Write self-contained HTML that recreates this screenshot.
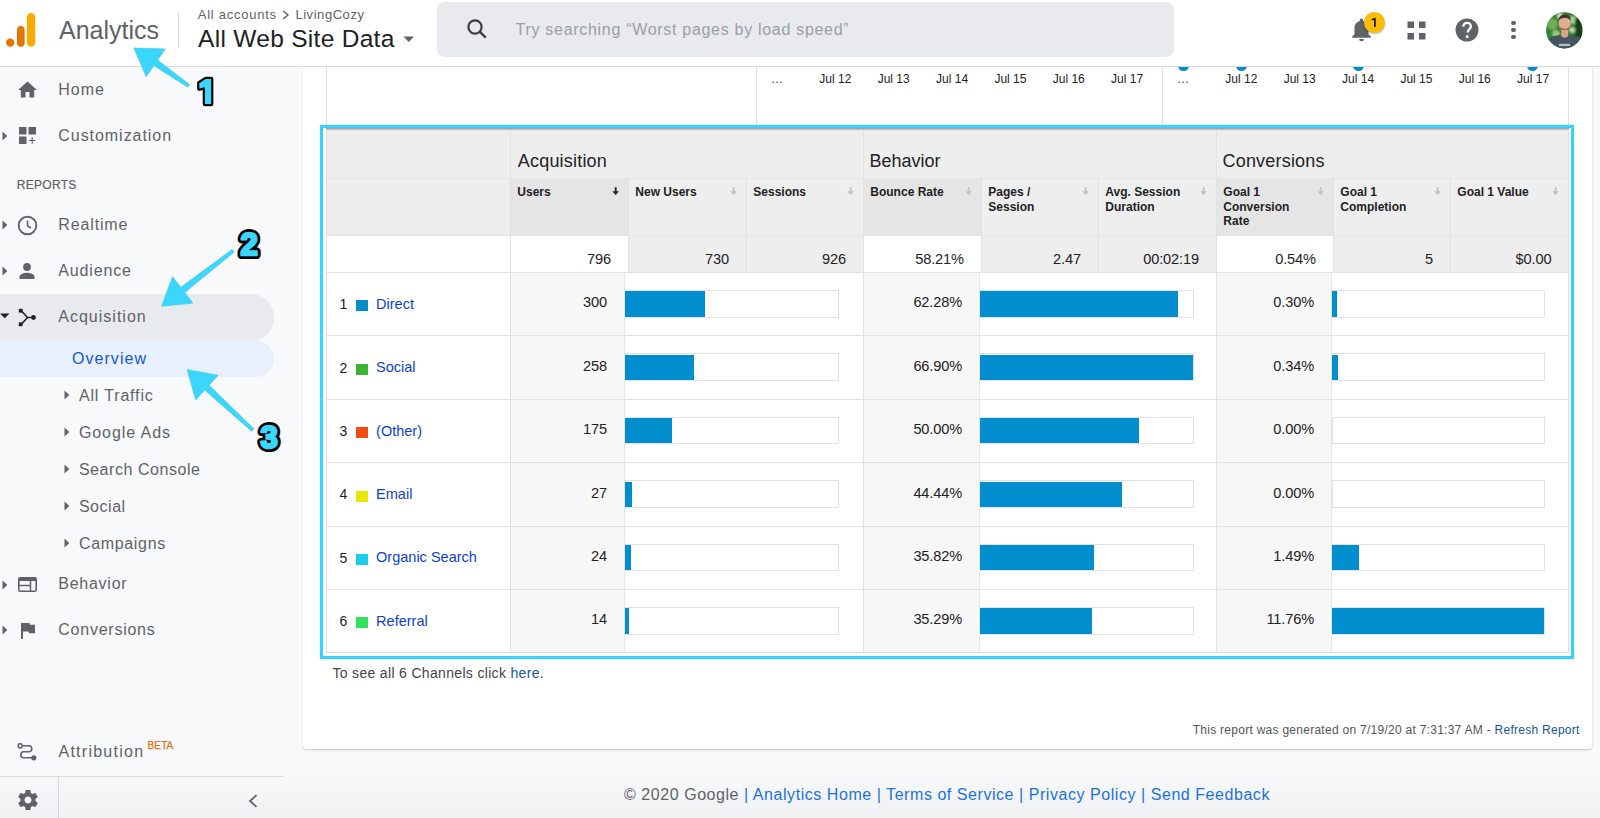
<!DOCTYPE html><html><head><meta charset="utf-8"><style>
html,body{margin:0;padding:0;}
body{width:1600px;height:818px;overflow:hidden;position:relative;background:#f8f9fa;font-family:"Liberation Sans", sans-serif;}
.t{position:absolute;white-space:nowrap;}
.r{position:absolute;}
a{color:inherit;text-decoration:none;}
</style></head><body>
<div class="r" style="left:303.00px;top:66.00px;width:1289.00px;height:683.00px;background:#ffffff;box-shadow:0 1px 2px rgba(60,64,67,.28);border-radius:0 0 3px 3px;"></div>
<div class="r" style="left:302.00px;top:66.00px;width:1.00px;height:683.00px;background:#eceef1;"></div>
<div class="r" style="left:326.00px;top:66.00px;width:1.00px;height:60.00px;background:#e0e0e0;"></div>
<div class="r" style="left:756.00px;top:66.00px;width:1.00px;height:60.00px;background:#e0e0e0;"></div>
<div class="r" style="left:1162.00px;top:66.00px;width:1.00px;height:60.00px;background:#e0e0e0;"></div>
<div class="r" style="left:1568.00px;top:66.00px;width:1.00px;height:60.00px;background:#e0e0e0;"></div>
<div class="t" style="left:277.00px;width:1000px;text-align:center;top:72.84px;font-size:12px;line-height:12px;color:#444;font-weight:normal;">&hellip;</div>
<div class="t" style="left:335.35px;width:1000px;text-align:center;top:72.84px;font-size:12px;line-height:12px;color:#222;font-weight:normal;">Jul 12</div>
<div class="t" style="left:393.70px;width:1000px;text-align:center;top:72.84px;font-size:12px;line-height:12px;color:#222;font-weight:normal;">Jul 13</div>
<div class="t" style="left:452.05px;width:1000px;text-align:center;top:72.84px;font-size:12px;line-height:12px;color:#222;font-weight:normal;">Jul 14</div>
<div class="t" style="left:510.40px;width:1000px;text-align:center;top:72.84px;font-size:12px;line-height:12px;color:#222;font-weight:normal;">Jul 15</div>
<div class="t" style="left:568.75px;width:1000px;text-align:center;top:72.84px;font-size:12px;line-height:12px;color:#222;font-weight:normal;">Jul 16</div>
<div class="t" style="left:627.10px;width:1000px;text-align:center;top:72.84px;font-size:12px;line-height:12px;color:#222;font-weight:normal;">Jul 17</div>
<div class="t" style="left:683.00px;width:1000px;text-align:center;top:72.84px;font-size:12px;line-height:12px;color:#444;font-weight:normal;">&hellip;</div>
<div class="t" style="left:741.35px;width:1000px;text-align:center;top:72.84px;font-size:12px;line-height:12px;color:#222;font-weight:normal;">Jul 12</div>
<div class="t" style="left:799.70px;width:1000px;text-align:center;top:72.84px;font-size:12px;line-height:12px;color:#222;font-weight:normal;">Jul 13</div>
<div class="t" style="left:858.05px;width:1000px;text-align:center;top:72.84px;font-size:12px;line-height:12px;color:#222;font-weight:normal;">Jul 14</div>
<div class="t" style="left:916.40px;width:1000px;text-align:center;top:72.84px;font-size:12px;line-height:12px;color:#222;font-weight:normal;">Jul 15</div>
<div class="t" style="left:974.75px;width:1000px;text-align:center;top:72.84px;font-size:12px;line-height:12px;color:#222;font-weight:normal;">Jul 16</div>
<div class="t" style="left:1033.10px;width:1000px;text-align:center;top:72.84px;font-size:12px;line-height:12px;color:#222;font-weight:normal;">Jul 17</div>
<div class="r" style="left:1177.5px;top:60.0px;width:11px;height:11px;border-radius:50%;background:#058dc7"></div>
<div class="r" style="left:1235.8px;top:60.0px;width:11px;height:11px;border-radius:50%;background:#058dc7"></div>
<div class="r" style="left:1352.5px;top:60.0px;width:11px;height:11px;border-radius:50%;background:#058dc7"></div>
<div class="r" style="left:1526.5px;top:60.0px;width:11px;height:11px;border-radius:50%;background:#058dc7"></div>
<div class="r" style="left:326.00px;top:128.00px;width:1242.50px;height:107.00px;background:#eeeeee;"></div>
<div class="r" style="left:510.00px;top:178.00px;width:118.00px;height:57.00px;background:#e5e5e5;"></div>
<div class="r" style="left:863.00px;top:178.00px;width:118.00px;height:57.00px;background:#e5e5e5;"></div>
<div class="r" style="left:1216.00px;top:178.00px;width:117.00px;height:57.00px;background:#e5e5e5;"></div>
<div class="r" style="left:326.00px;top:235.00px;width:184.00px;height:37.00px;background:#ffffff;"></div>
<div class="r" style="left:510.00px;top:235.00px;width:118.00px;height:37.00px;background:#ffffff;"></div>
<div class="r" style="left:628.00px;top:235.00px;width:118.00px;height:37.00px;background:#eeeeee;"></div>
<div class="r" style="left:746.00px;top:235.00px;width:117.00px;height:37.00px;background:#eeeeee;"></div>
<div class="r" style="left:863.00px;top:235.00px;width:118.00px;height:37.00px;background:#ffffff;"></div>
<div class="r" style="left:981.00px;top:235.00px;width:117.00px;height:37.00px;background:#eeeeee;"></div>
<div class="r" style="left:1098.00px;top:235.00px;width:118.00px;height:37.00px;background:#eeeeee;"></div>
<div class="r" style="left:1216.00px;top:235.00px;width:117.00px;height:37.00px;background:#ffffff;"></div>
<div class="r" style="left:1333.00px;top:235.00px;width:117.00px;height:37.00px;background:#eeeeee;"></div>
<div class="r" style="left:1450.00px;top:235.00px;width:118.50px;height:37.00px;background:#eeeeee;"></div>
<div class="r" style="left:326.00px;top:272.00px;width:1242.50px;height:63.40px;background:#ffffff;"></div>
<div class="r" style="left:510.00px;top:272.00px;width:114.00px;height:63.40px;background:#f7f7f7;"></div>
<div class="r" style="left:863.00px;top:272.00px;width:116.00px;height:63.40px;background:#f7f7f7;"></div>
<div class="r" style="left:1216.00px;top:272.00px;width:115.00px;height:63.40px;background:#f7f7f7;"></div>
<div class="r" style="left:326.00px;top:335.40px;width:1242.50px;height:63.40px;background:#ffffff;"></div>
<div class="r" style="left:510.00px;top:335.40px;width:114.00px;height:63.40px;background:#f7f7f7;"></div>
<div class="r" style="left:863.00px;top:335.40px;width:116.00px;height:63.40px;background:#f7f7f7;"></div>
<div class="r" style="left:1216.00px;top:335.40px;width:115.00px;height:63.40px;background:#f7f7f7;"></div>
<div class="r" style="left:326.00px;top:398.80px;width:1242.50px;height:63.40px;background:#ffffff;"></div>
<div class="r" style="left:510.00px;top:398.80px;width:114.00px;height:63.40px;background:#f7f7f7;"></div>
<div class="r" style="left:863.00px;top:398.80px;width:116.00px;height:63.40px;background:#f7f7f7;"></div>
<div class="r" style="left:1216.00px;top:398.80px;width:115.00px;height:63.40px;background:#f7f7f7;"></div>
<div class="r" style="left:326.00px;top:462.20px;width:1242.50px;height:63.40px;background:#ffffff;"></div>
<div class="r" style="left:510.00px;top:462.20px;width:114.00px;height:63.40px;background:#f7f7f7;"></div>
<div class="r" style="left:863.00px;top:462.20px;width:116.00px;height:63.40px;background:#f7f7f7;"></div>
<div class="r" style="left:1216.00px;top:462.20px;width:115.00px;height:63.40px;background:#f7f7f7;"></div>
<div class="r" style="left:326.00px;top:525.60px;width:1242.50px;height:63.40px;background:#ffffff;"></div>
<div class="r" style="left:510.00px;top:525.60px;width:114.00px;height:63.40px;background:#f7f7f7;"></div>
<div class="r" style="left:863.00px;top:525.60px;width:116.00px;height:63.40px;background:#f7f7f7;"></div>
<div class="r" style="left:1216.00px;top:525.60px;width:115.00px;height:63.40px;background:#f7f7f7;"></div>
<div class="r" style="left:326.00px;top:589.00px;width:1242.50px;height:63.40px;background:#ffffff;"></div>
<div class="r" style="left:510.00px;top:589.00px;width:114.00px;height:63.40px;background:#f7f7f7;"></div>
<div class="r" style="left:863.00px;top:589.00px;width:116.00px;height:63.40px;background:#f7f7f7;"></div>
<div class="r" style="left:1216.00px;top:589.00px;width:115.00px;height:63.40px;background:#f7f7f7;"></div>
<div class="r" style="left:326.00px;top:178.00px;width:1242.50px;height:1.00px;background:#e6e6e6;"></div>
<div class="r" style="left:326.00px;top:235.00px;width:1242.50px;height:1.00px;background:#e6e6e6;"></div>
<div class="r" style="left:326.00px;top:272.00px;width:1242.50px;height:1.00px;background:#e2e2e2;"></div>
<div class="r" style="left:326.00px;top:335.40px;width:1242.50px;height:1.00px;background:#e2e2e2;"></div>
<div class="r" style="left:326.00px;top:398.80px;width:1242.50px;height:1.00px;background:#e2e2e2;"></div>
<div class="r" style="left:326.00px;top:462.20px;width:1242.50px;height:1.00px;background:#e2e2e2;"></div>
<div class="r" style="left:326.00px;top:525.60px;width:1242.50px;height:1.00px;background:#e2e2e2;"></div>
<div class="r" style="left:326.00px;top:589.00px;width:1242.50px;height:1.00px;background:#e2e2e2;"></div>
<div class="r" style="left:326.00px;top:652.40px;width:1242.50px;height:1.00px;background:#e2e2e2;"></div>
<div class="r" style="left:510.00px;top:128.00px;width:1.00px;height:524.80px;background:#e2e2e2;"></div>
<div class="r" style="left:863.00px;top:128.00px;width:1.00px;height:524.80px;background:#e2e2e2;"></div>
<div class="r" style="left:1216.00px;top:128.00px;width:1.00px;height:524.80px;background:#e2e2e2;"></div>
<div class="r" style="left:628.00px;top:178.00px;width:1.00px;height:94.00px;background:#e2e2e2;"></div>
<div class="r" style="left:746.00px;top:178.00px;width:1.00px;height:94.00px;background:#e2e2e2;"></div>
<div class="r" style="left:981.00px;top:178.00px;width:1.00px;height:94.00px;background:#e2e2e2;"></div>
<div class="r" style="left:1098.00px;top:178.00px;width:1.00px;height:94.00px;background:#e2e2e2;"></div>
<div class="r" style="left:1333.00px;top:178.00px;width:1.00px;height:94.00px;background:#e2e2e2;"></div>
<div class="r" style="left:1450.00px;top:178.00px;width:1.00px;height:94.00px;background:#e2e2e2;"></div>
<div class="r" style="left:624.00px;top:272.00px;width:1.00px;height:380.80px;background:#e6e6e6;"></div>
<div class="r" style="left:979.00px;top:272.00px;width:1.00px;height:380.80px;background:#e6e6e6;"></div>
<div class="r" style="left:1331.00px;top:272.00px;width:1.00px;height:380.80px;background:#e6e6e6;"></div>
<div class="r" style="left:326px;top:128px;width:1242.5px;height:524.8px;box-sizing:border-box;border:1px solid #dddddd;border-top:none"></div>
<div class="r" style="left:326.00px;top:128.00px;width:1242.50px;height:1.00px;background:#a2a4a5;"></div>
<div class="r" style="left:326.00px;top:129.00px;width:1242.50px;height:1.00px;background:#c8c6c5;"></div>
<div class="r" style="left:326.00px;top:130.00px;width:1242.50px;height:1.00px;background:#e2e2e2;"></div>
<div class="t " style="left:517.80px;top:151.76px;font-size:18px;line-height:18px;color:#222;font-weight:normal;letter-spacing:0.2px;">Acquisition</div>
<div class="t " style="left:869.50px;top:151.76px;font-size:18px;line-height:18px;color:#222;font-weight:normal;">Behavior</div>
<div class="t " style="left:1222.50px;top:151.76px;font-size:18px;line-height:18px;color:#222;font-weight:normal;letter-spacing:0.2px;">Conversions</div>
<div class="t " style="left:517.30px;top:186.44px;font-size:12px;line-height:12px;color:#222;font-weight:bold;">Users</div>
<svg class="r" style="left:611px;top:186px" width="8" height="10" viewBox="0 0 8 10"><path d="M3.75 1.2h1.9v4h2.5L4.7 9 1.3 5.2h2.45z" fill="#262626"/></svg>
<div class="t " style="left:635.30px;top:186.44px;font-size:12px;line-height:12px;color:#222;font-weight:bold;">New Users</div>
<svg class="r" style="left:729px;top:186px" width="8" height="10" viewBox="0 0 8 10"><path d="M3.75 1.2h1.9v4h2.5L4.7 9 1.3 5.2h2.45z" fill="#c2c2c2"/></svg>
<div class="t " style="left:753.30px;top:186.44px;font-size:12px;line-height:12px;color:#222;font-weight:bold;">Sessions</div>
<svg class="r" style="left:846px;top:186px" width="8" height="10" viewBox="0 0 8 10"><path d="M3.75 1.2h1.9v4h2.5L4.7 9 1.3 5.2h2.45z" fill="#c2c2c2"/></svg>
<div class="t " style="left:870.30px;top:186.44px;font-size:12px;line-height:12px;color:#222;font-weight:bold;">Bounce Rate</div>
<svg class="r" style="left:964px;top:186px" width="8" height="10" viewBox="0 0 8 10"><path d="M3.75 1.2h1.9v4h2.5L4.7 9 1.3 5.2h2.45z" fill="#c2c2c2"/></svg>
<div class="t " style="left:988.30px;top:186.44px;font-size:12px;line-height:12px;color:#222;font-weight:bold;">Pages /</div>
<div class="t " style="left:988.30px;top:200.74px;font-size:12px;line-height:12px;color:#222;font-weight:bold;">Session</div>
<svg class="r" style="left:1081px;top:186px" width="8" height="10" viewBox="0 0 8 10"><path d="M3.75 1.2h1.9v4h2.5L4.7 9 1.3 5.2h2.45z" fill="#c2c2c2"/></svg>
<div class="t " style="left:1105.30px;top:186.44px;font-size:12px;line-height:12px;color:#222;font-weight:bold;">Avg. Session</div>
<div class="t " style="left:1105.30px;top:200.74px;font-size:12px;line-height:12px;color:#222;font-weight:bold;">Duration</div>
<svg class="r" style="left:1199px;top:186px" width="8" height="10" viewBox="0 0 8 10"><path d="M3.75 1.2h1.9v4h2.5L4.7 9 1.3 5.2h2.45z" fill="#c2c2c2"/></svg>
<div class="t " style="left:1223.30px;top:186.44px;font-size:12px;line-height:12px;color:#222;font-weight:bold;">Goal 1</div>
<div class="t " style="left:1223.30px;top:200.74px;font-size:12px;line-height:12px;color:#222;font-weight:bold;">Conversion</div>
<div class="t " style="left:1223.30px;top:215.04px;font-size:12px;line-height:12px;color:#222;font-weight:bold;">Rate</div>
<svg class="r" style="left:1316px;top:186px" width="8" height="10" viewBox="0 0 8 10"><path d="M3.75 1.2h1.9v4h2.5L4.7 9 1.3 5.2h2.45z" fill="#c2c2c2"/></svg>
<div class="t " style="left:1340.30px;top:186.44px;font-size:12px;line-height:12px;color:#222;font-weight:bold;">Goal 1</div>
<div class="t " style="left:1340.30px;top:200.74px;font-size:12px;line-height:12px;color:#222;font-weight:bold;">Completion</div>
<svg class="r" style="left:1433px;top:186px" width="8" height="10" viewBox="0 0 8 10"><path d="M3.75 1.2h1.9v4h2.5L4.7 9 1.3 5.2h2.45z" fill="#c2c2c2"/></svg>
<div class="t " style="left:1457.30px;top:186.44px;font-size:12px;line-height:12px;color:#222;font-weight:bold;">Goal 1 Value</div>
<svg class="r" style="left:1551px;top:186px" width="8" height="10" viewBox="0 0 8 10"><path d="M3.75 1.2h1.9v4h2.5L4.7 9 1.3 5.2h2.45z" fill="#c2c2c2"/></svg>
<div class="t" style="left:110.90px;width:500px;text-align:right;top:251.64px;font-size:14.6px;line-height:14.6px;color:#222;font-weight:normal;letter-spacing:-0.15px;">796</div>
<div class="t" style="left:228.90px;width:500px;text-align:right;top:251.64px;font-size:14.6px;line-height:14.6px;color:#222;font-weight:normal;letter-spacing:-0.15px;">730</div>
<div class="t" style="left:345.90px;width:500px;text-align:right;top:251.64px;font-size:14.6px;line-height:14.6px;color:#222;font-weight:normal;letter-spacing:-0.15px;">926</div>
<div class="t" style="left:463.90px;width:500px;text-align:right;top:251.64px;font-size:14.6px;line-height:14.6px;color:#222;font-weight:normal;letter-spacing:-0.15px;">58.21%</div>
<div class="t" style="left:580.90px;width:500px;text-align:right;top:251.64px;font-size:14.6px;line-height:14.6px;color:#222;font-weight:normal;letter-spacing:-0.15px;">2.47</div>
<div class="t" style="left:698.90px;width:500px;text-align:right;top:251.64px;font-size:14.6px;line-height:14.6px;color:#222;font-weight:normal;letter-spacing:-0.15px;">00:02:19</div>
<div class="t" style="left:815.90px;width:500px;text-align:right;top:251.64px;font-size:14.6px;line-height:14.6px;color:#222;font-weight:normal;letter-spacing:-0.15px;">0.54%</div>
<div class="t" style="left:932.90px;width:500px;text-align:right;top:251.64px;font-size:14.6px;line-height:14.6px;color:#222;font-weight:normal;letter-spacing:-0.15px;">5</div>
<div class="t" style="left:1051.40px;width:500px;text-align:right;top:251.64px;font-size:14.6px;line-height:14.6px;color:#222;font-weight:normal;letter-spacing:-0.15px;">$0.00</div>
<div class="t " style="left:339.40px;top:297.25px;font-size:14px;line-height:14px;color:#222;font-weight:normal;">1</div>
<div class="r" style="left:356.00px;top:300.30px;width:11.50px;height:11.20px;background:#058dc7;"></div>
<div class="t " style="left:376.10px;top:296.73px;font-size:14.5px;line-height:14.5px;color:#0d3fd0;font-weight:normal;">Direct</div>
<div class="t" style="left:107.00px;width:500px;text-align:right;top:295.34px;font-size:14.6px;line-height:14.6px;color:#222;font-weight:normal;letter-spacing:-0.15px;">300</div>
<div class="r" style="left:625.00px;top:290.00px;width:213.80px;height:27.50px;background:#ffffff;border:1px solid #e2e2e2;box-sizing:border-box;"></div>
<div class="r" style="left:625.00px;top:291.40px;width:80.35px;height:25.20px;background:#018ecf;"></div>
<div class="t" style="left:462.00px;width:500px;text-align:right;top:295.34px;font-size:14.6px;line-height:14.6px;color:#222;font-weight:normal;letter-spacing:-0.15px;">62.28%</div>
<div class="r" style="left:980.00px;top:290.00px;width:213.80px;height:27.50px;background:#ffffff;border:1px solid #e2e2e2;box-sizing:border-box;"></div>
<div class="r" style="left:980.00px;top:291.40px;width:198.48px;height:25.20px;background:#018ecf;"></div>
<div class="t" style="left:814.00px;width:500px;text-align:right;top:295.34px;font-size:14.6px;line-height:14.6px;color:#222;font-weight:normal;letter-spacing:-0.15px;">0.30%</div>
<div class="r" style="left:1332.00px;top:290.00px;width:212.60px;height:27.50px;background:#ffffff;border:1px solid #e2e2e2;box-sizing:border-box;"></div>
<div class="r" style="left:1332.00px;top:291.40px;width:5.41px;height:25.20px;background:#018ecf;"></div>
<div class="t " style="left:339.40px;top:360.65px;font-size:14px;line-height:14px;color:#222;font-weight:normal;">2</div>
<div class="r" style="left:356.00px;top:363.70px;width:11.50px;height:11.20px;background:#3cb431;"></div>
<div class="t " style="left:376.10px;top:360.13px;font-size:14.5px;line-height:14.5px;color:#0d3fd0;font-weight:normal;">Social</div>
<div class="t" style="left:107.00px;width:500px;text-align:right;top:358.74px;font-size:14.6px;line-height:14.6px;color:#222;font-weight:normal;letter-spacing:-0.15px;">258</div>
<div class="r" style="left:625.00px;top:353.40px;width:213.80px;height:27.50px;background:#ffffff;border:1px solid #e2e2e2;box-sizing:border-box;"></div>
<div class="r" style="left:625.00px;top:354.80px;width:69.10px;height:25.20px;background:#018ecf;"></div>
<div class="t" style="left:462.00px;width:500px;text-align:right;top:358.74px;font-size:14.6px;line-height:14.6px;color:#222;font-weight:normal;letter-spacing:-0.15px;">66.90%</div>
<div class="r" style="left:980.00px;top:353.40px;width:213.80px;height:27.50px;background:#ffffff;border:1px solid #e2e2e2;box-sizing:border-box;"></div>
<div class="r" style="left:980.00px;top:354.80px;width:213.20px;height:25.20px;background:#018ecf;"></div>
<div class="t" style="left:814.00px;width:500px;text-align:right;top:358.74px;font-size:14.6px;line-height:14.6px;color:#222;font-weight:normal;letter-spacing:-0.15px;">0.34%</div>
<div class="r" style="left:1332.00px;top:353.40px;width:212.60px;height:27.50px;background:#ffffff;border:1px solid #e2e2e2;box-sizing:border-box;"></div>
<div class="r" style="left:1332.00px;top:354.80px;width:6.13px;height:25.20px;background:#018ecf;"></div>
<div class="t " style="left:339.40px;top:424.05px;font-size:14px;line-height:14px;color:#222;font-weight:normal;">3</div>
<div class="r" style="left:356.00px;top:427.10px;width:11.50px;height:11.20px;background:#f24b13;"></div>
<div class="t " style="left:376.10px;top:423.53px;font-size:14.5px;line-height:14.5px;color:#0d3fd0;font-weight:normal;">(Other)</div>
<div class="t" style="left:107.00px;width:500px;text-align:right;top:422.14px;font-size:14.6px;line-height:14.6px;color:#222;font-weight:normal;letter-spacing:-0.15px;">175</div>
<div class="r" style="left:625.00px;top:416.80px;width:213.80px;height:27.50px;background:#ffffff;border:1px solid #e2e2e2;box-sizing:border-box;"></div>
<div class="r" style="left:625.00px;top:418.20px;width:46.87px;height:25.20px;background:#018ecf;"></div>
<div class="t" style="left:462.00px;width:500px;text-align:right;top:422.14px;font-size:14.6px;line-height:14.6px;color:#222;font-weight:normal;letter-spacing:-0.15px;">50.00%</div>
<div class="r" style="left:980.00px;top:416.80px;width:213.80px;height:27.50px;background:#ffffff;border:1px solid #e2e2e2;box-sizing:border-box;"></div>
<div class="r" style="left:980.00px;top:418.20px;width:159.34px;height:25.20px;background:#018ecf;"></div>
<div class="t" style="left:814.00px;width:500px;text-align:right;top:422.14px;font-size:14.6px;line-height:14.6px;color:#222;font-weight:normal;letter-spacing:-0.15px;">0.00%</div>
<div class="r" style="left:1332.00px;top:416.80px;width:212.60px;height:27.50px;background:#ffffff;border:1px solid #e2e2e2;box-sizing:border-box;"></div>
<div class="t " style="left:339.40px;top:487.45px;font-size:14px;line-height:14px;color:#222;font-weight:normal;">4</div>
<div class="r" style="left:356.00px;top:490.50px;width:11.50px;height:11.20px;background:#e6e800;"></div>
<div class="t " style="left:376.10px;top:486.93px;font-size:14.5px;line-height:14.5px;color:#0d3fd0;font-weight:normal;">Email</div>
<div class="t" style="left:107.00px;width:500px;text-align:right;top:485.54px;font-size:14.6px;line-height:14.6px;color:#222;font-weight:normal;letter-spacing:-0.15px;">27</div>
<div class="r" style="left:625.00px;top:480.20px;width:213.80px;height:27.50px;background:#ffffff;border:1px solid #e2e2e2;box-sizing:border-box;"></div>
<div class="r" style="left:625.00px;top:481.60px;width:7.23px;height:25.20px;background:#018ecf;"></div>
<div class="t" style="left:462.00px;width:500px;text-align:right;top:485.54px;font-size:14.6px;line-height:14.6px;color:#222;font-weight:normal;letter-spacing:-0.15px;">44.44%</div>
<div class="r" style="left:980.00px;top:480.20px;width:213.80px;height:27.50px;background:#ffffff;border:1px solid #e2e2e2;box-sizing:border-box;"></div>
<div class="r" style="left:980.00px;top:481.60px;width:141.62px;height:25.20px;background:#018ecf;"></div>
<div class="t" style="left:814.00px;width:500px;text-align:right;top:485.54px;font-size:14.6px;line-height:14.6px;color:#222;font-weight:normal;letter-spacing:-0.15px;">0.00%</div>
<div class="r" style="left:1332.00px;top:480.20px;width:212.60px;height:27.50px;background:#ffffff;border:1px solid #e2e2e2;box-sizing:border-box;"></div>
<div class="t " style="left:339.40px;top:550.85px;font-size:14px;line-height:14px;color:#222;font-weight:normal;">5</div>
<div class="r" style="left:356.00px;top:553.90px;width:11.50px;height:11.20px;background:#1ccde6;"></div>
<div class="t " style="left:376.10px;top:550.33px;font-size:14.5px;line-height:14.5px;color:#0d3fd0;font-weight:normal;">Organic Search</div>
<div class="t" style="left:107.00px;width:500px;text-align:right;top:548.94px;font-size:14.6px;line-height:14.6px;color:#222;font-weight:normal;letter-spacing:-0.15px;">24</div>
<div class="r" style="left:625.00px;top:543.60px;width:213.80px;height:27.50px;background:#ffffff;border:1px solid #e2e2e2;box-sizing:border-box;"></div>
<div class="r" style="left:625.00px;top:545.00px;width:6.43px;height:25.20px;background:#018ecf;"></div>
<div class="t" style="left:462.00px;width:500px;text-align:right;top:548.94px;font-size:14.6px;line-height:14.6px;color:#222;font-weight:normal;letter-spacing:-0.15px;">35.82%</div>
<div class="r" style="left:980.00px;top:543.60px;width:213.80px;height:27.50px;background:#ffffff;border:1px solid #e2e2e2;box-sizing:border-box;"></div>
<div class="r" style="left:980.00px;top:545.00px;width:114.15px;height:25.20px;background:#018ecf;"></div>
<div class="t" style="left:814.00px;width:500px;text-align:right;top:548.94px;font-size:14.6px;line-height:14.6px;color:#222;font-weight:normal;letter-spacing:-0.15px;">1.49%</div>
<div class="r" style="left:1332.00px;top:543.60px;width:212.60px;height:27.50px;background:#ffffff;border:1px solid #e2e2e2;box-sizing:border-box;"></div>
<div class="r" style="left:1332.00px;top:545.00px;width:26.86px;height:25.20px;background:#018ecf;"></div>
<div class="t " style="left:339.40px;top:614.25px;font-size:14px;line-height:14px;color:#222;font-weight:normal;">6</div>
<div class="r" style="left:356.00px;top:617.30px;width:11.50px;height:11.20px;background:#31e25f;"></div>
<div class="t " style="left:376.10px;top:613.73px;font-size:14.5px;line-height:14.5px;color:#0d3fd0;font-weight:normal;">Referral</div>
<div class="t" style="left:107.00px;width:500px;text-align:right;top:612.34px;font-size:14.6px;line-height:14.6px;color:#222;font-weight:normal;letter-spacing:-0.15px;">14</div>
<div class="r" style="left:625.00px;top:607.00px;width:213.80px;height:27.50px;background:#ffffff;border:1px solid #e2e2e2;box-sizing:border-box;"></div>
<div class="r" style="left:625.00px;top:608.40px;width:3.75px;height:25.20px;background:#018ecf;"></div>
<div class="t" style="left:462.00px;width:500px;text-align:right;top:612.34px;font-size:14.6px;line-height:14.6px;color:#222;font-weight:normal;letter-spacing:-0.15px;">35.29%</div>
<div class="r" style="left:980.00px;top:607.00px;width:213.80px;height:27.50px;background:#ffffff;border:1px solid #e2e2e2;box-sizing:border-box;"></div>
<div class="r" style="left:980.00px;top:608.40px;width:112.46px;height:25.20px;background:#018ecf;"></div>
<div class="t" style="left:814.00px;width:500px;text-align:right;top:612.34px;font-size:14.6px;line-height:14.6px;color:#222;font-weight:normal;letter-spacing:-0.15px;">11.76%</div>
<div class="r" style="left:1332.00px;top:607.00px;width:212.60px;height:27.50px;background:#ffffff;border:1px solid #e2e2e2;box-sizing:border-box;"></div>
<div class="r" style="left:1332.00px;top:608.40px;width:212.00px;height:25.20px;background:#018ecf;"></div>
<div class="r" style="left:320px;top:125px;width:1254px;height:534px;box-sizing:border-box;border:3px solid #35d4fb;box-shadow:0 0 1.2px rgba(90,70,60,.35), inset 0 0 1px rgba(120,90,70,.25)"></div>
<div class="t " style="left:332.40px;top:666.35px;font-size:14px;line-height:14px;color:#444;font-weight:normal;letter-spacing:0.33px;">To see all 6 Channels click <span style="color:#15569c">here</span>.</div>
<div class="t" style="left:1079.70px;width:500px;text-align:right;top:724.44px;font-size:12px;line-height:12px;color:#555;font-weight:normal;letter-spacing:0.27px;">This report was generated on 7/19/20 at 7:31:37 AM - <span style="color:#15569c">Refresh Report</span></div>
<div class="t" style="left:447.00px;width:1000px;text-align:center;top:787.21px;font-size:16px;line-height:16px;color:#5f6368;font-weight:normal;letter-spacing:0.55px;">&copy; 2020 Google <span style="color:#1a73e8">| Analytics Home | Terms of Service | Privacy Policy | Send Feedback</span></div>
<div class="r" style="left:0.00px;top:66.00px;width:302.00px;height:752.00px;background:#f8f9fa;"></div>
<div class="r" style="left:0.00px;top:294.20px;width:274.00px;height:46.60px;background:#e8eaed;border-radius:0 23px 23px 0;"></div>
<div class="r" style="left:0.00px;top:340.60px;width:274.00px;height:36.40px;background:#e8f0fe;border-radius:0 18px 18px 0;"></div>
<svg class="r" style="left:18px;top:81px" width="19" height="17" viewBox="0 0 19 17"><path d="M7.5 16.5v-5.5h4v5.5h4.7V9h2.8L9.5 0.5 0 9h2.8v7.5z" fill="#5f6368"/></svg>
<div class="t " style="left:58.30px;top:81.66px;font-size:16px;line-height:16px;color:#5f6368;font-weight:normal;letter-spacing:1.0px;">Home</div>
<svg class="r" style="left:2px;top:131px" width="6" height="10" viewBox="0 0 6 10"><path d="M0.5 0.5L5.3 5 0.5 9.5z" fill="#5f6368"/></svg>
<svg class="r" style="left:19px;top:127px" width="18" height="18" viewBox="0 0 18 18"><rect x="0" y="0" width="7.5" height="7.5" fill="#5f6368"/><rect x="9.5" y="0" width="7.5" height="7.5" fill="#5f6368"/><rect x="0" y="9.5" width="7.5" height="7.5" fill="#5f6368"/><path d="M12.6 10.3h1.2v2.6h2.6v1.2h-2.6v2.6h-1.2v-2.6h-2.6v-1.2h2.6z" fill="#5f6368"/></svg>
<div class="t " style="left:58.30px;top:127.86px;font-size:16px;line-height:16px;color:#5f6368;font-weight:normal;letter-spacing:0.95px;">Customization</div>
<div class="t " style="left:16.70px;top:179.04px;font-size:12px;line-height:12px;color:#5f6368;font-weight:normal;letter-spacing:0.3px;-webkit-text-stroke:0.2px #5f6368;">REPORTS</div>
<svg class="r" style="left:2px;top:220px" width="6" height="10" viewBox="0 0 6 10"><path d="M0.5 0.5L5.3 5 0.5 9.5z" fill="#5f6368"/></svg>
<svg class="r" style="left:17px;top:215px" width="21" height="21" viewBox="0 0 21 21"><circle cx="10.5" cy="10.5" r="8.8" fill="none" stroke="#5f6368" stroke-width="1.9"/><path d="M10.5 5.5v5.3l3.6 2.2" fill="none" stroke="#5f6368" stroke-width="1.6"/></svg>
<div class="t " style="left:58.30px;top:216.86px;font-size:16px;line-height:16px;color:#5f6368;font-weight:normal;letter-spacing:0.86px;">Realtime</div>
<svg class="r" style="left:2px;top:266px" width="6" height="10" viewBox="0 0 6 10"><path d="M0.5 0.5L5.3 5 0.5 9.5z" fill="#5f6368"/></svg>
<svg class="r" style="left:19px;top:263px" width="17" height="16" viewBox="0 0 17 16"><circle cx="8" cy="4" r="3.9" fill="#5f6368"/><path d="M0.5 16v-2.2c0-2.6 5-4 7.5-4s7.5 1.4 7.5 4V16z" fill="#5f6368"/></svg>
<div class="t " style="left:58.30px;top:263.06px;font-size:16px;line-height:16px;color:#5f6368;font-weight:normal;letter-spacing:0.84px;">Audience</div>
<svg class="r" style="left:0px;top:313px" width="10" height="6" viewBox="0 0 10 6"><path d="M0 0.5h9.5L4.75 5.3z" fill="#202124"/></svg>
<svg class="r" style="left:18px;top:308px" width="19" height="19" viewBox="0 0 19 19"><path d="M3 2.5L9.5 9.5H15M9.5 9.5L3 16.5" fill="none" stroke="#202124" stroke-width="1.7"/><rect x="0.8" y="0.8" width="3.8" height="3.8" fill="#202124"/><rect x="0.8" y="14.4" width="3.8" height="3.8" fill="#202124"/><circle cx="15.5" cy="9.5" r="2.4" fill="#202124"/></svg>
<div class="t " style="left:58.30px;top:309.46px;font-size:16px;line-height:16px;color:#5f6368;font-weight:normal;letter-spacing:1.0px;">Acquisition</div>
<div class="t " style="left:72.00px;top:351.26px;font-size:16px;line-height:16px;color:#1558d6;font-weight:normal;letter-spacing:1.05px;">Overview</div>
<svg class="r" style="left:64px;top:390px" width="6" height="10" viewBox="0 0 6 10"><path d="M0.5 0.5L5.3 5 0.5 9.5z" fill="#5f6368"/></svg>
<div class="t " style="left:78.90px;top:387.96px;font-size:16px;line-height:16px;color:#5f6368;font-weight:normal;letter-spacing:0.84px;">All Traffic</div>
<svg class="r" style="left:64px;top:427px" width="6" height="10" viewBox="0 0 6 10"><path d="M0.5 0.5L5.3 5 0.5 9.5z" fill="#5f6368"/></svg>
<div class="t " style="left:78.90px;top:424.86px;font-size:16px;line-height:16px;color:#5f6368;font-weight:normal;letter-spacing:0.93px;">Google Ads</div>
<svg class="r" style="left:64px;top:464px" width="6" height="10" viewBox="0 0 6 10"><path d="M0.5 0.5L5.3 5 0.5 9.5z" fill="#5f6368"/></svg>
<div class="t " style="left:78.90px;top:461.76px;font-size:16px;line-height:16px;color:#5f6368;font-weight:normal;letter-spacing:0.55px;">Search Console</div>
<svg class="r" style="left:64px;top:501px" width="6" height="10" viewBox="0 0 6 10"><path d="M0.5 0.5L5.3 5 0.5 9.5z" fill="#5f6368"/></svg>
<div class="t " style="left:78.90px;top:498.66px;font-size:16px;line-height:16px;color:#5f6368;font-weight:normal;letter-spacing:0.54px;">Social</div>
<svg class="r" style="left:64px;top:538px" width="6" height="10" viewBox="0 0 6 10"><path d="M0.5 0.5L5.3 5 0.5 9.5z" fill="#5f6368"/></svg>
<div class="t " style="left:78.90px;top:535.56px;font-size:16px;line-height:16px;color:#5f6368;font-weight:normal;letter-spacing:0.68px;">Campaigns</div>
<svg class="r" style="left:2px;top:580px" width="6" height="10" viewBox="0 0 6 10"><path d="M0.5 0.5L5.3 5 0.5 9.5z" fill="#5f6368"/></svg>
<svg class="r" style="left:18px;top:577px" width="19" height="15" viewBox="0 0 19 15"><rect x="0.8" y="0.8" width="17.4" height="13.4" rx="1.5" fill="none" stroke="#5f6368" stroke-width="1.6"/><rect x="0.8" y="0.8" width="17.4" height="3.2" fill="#5f6368"/><path d="M1 8.6h11.8M12.5 4v10" stroke="#5f6368" stroke-width="1.5"/></svg>
<div class="t " style="left:58.30px;top:576.21px;font-size:16px;line-height:16px;color:#5f6368;font-weight:normal;letter-spacing:0.74px;">Behavior</div>
<svg class="r" style="left:2px;top:625px" width="6" height="10" viewBox="0 0 6 10"><path d="M0.5 0.5L5.3 5 0.5 9.5z" fill="#5f6368"/></svg>
<svg class="r" style="left:20px;top:622px" width="17" height="18" viewBox="0 0 17 18"><path d="M1 1h8.5l0.5 1.8H15v8.5H9l-0.5-1.8H3V17H1z" fill="#5f6368"/></svg>
<div class="t " style="left:58.30px;top:622.06px;font-size:16px;line-height:16px;color:#5f6368;font-weight:normal;letter-spacing:0.75px;">Conversions</div>
<svg class="r" style="left:17px;top:743px" width="22" height="18" viewBox="0 0 22 18"><circle cx="3.2" cy="2.8" r="2.1" fill="none" stroke="#5f6368" stroke-width="1.5"/><path d="M5.3 2.8h6.5a3 3 0 0 1 0 6H6.8a3 3 0 0 0 0 6h8.5" fill="none" stroke="#5f6368" stroke-width="1.6"/><circle cx="16.8" cy="14.8" r="2.6" fill="#5f6368"/></svg>
<div class="t " style="left:58.50px;top:743.96px;font-size:16px;line-height:16px;color:#5f6368;font-weight:normal;letter-spacing:1.25px;">Attribution</div>
<div class="t " style="left:147.60px;top:740.53px;font-size:10px;line-height:10px;color:#e8710a;font-weight:normal;-webkit-text-stroke:0.25px #e8710a;letter-spacing:0.1px;">BETA</div>
<div class="r" style="left:0.00px;top:775.50px;width:283.00px;height:1.00px;background:#dadce0;"></div>
<div class="r" style="left:58.00px;top:776.00px;width:1.00px;height:42.00px;background:#dadce0;"></div>
<svg class="r" style="left:18px;top:790px" width="20" height="20" viewBox="0 0 20 20"><path fill="#5f6368" d="M17.4 11c.04-.3.06-.64.06-1s-.02-.7-.07-1l2.1-1.65c.2-.15.24-.42.12-.64l-2-3.46c-.12-.22-.4-.3-.6-.22l-2.5 1c-.52-.4-1.08-.73-1.7-.98l-.37-2.65C12.4.17 12.2 0 11.96 0h-4c-.25 0-.45.17-.5.42L7.1 3.07c-.6.25-1.17.59-1.7.98l-2.48-1c-.23-.09-.5 0-.6.22l-2 3.46c-.13.22-.07.5.12.64L2.57 9c-.05.32-.07.65-.07 1s.02.68.07 1l-2.1 1.65c-.2.15-.24.42-.12.64l2 3.46c.12.22.4.3.6.22l2.5-1c.52.4 1.08.73 1.7.98l.37 2.65c.05.25.25.42.5.42h4c.25 0 .46-.17.49-.42l.37-2.65c.6-.25 1.17-.59 1.7-.98l2.48 1c.23.09.5 0 .6-.22l2-3.46c.12-.22.07-.5-.12-.64L17.4 11zM10 13.5c-1.93 0-3.5-1.57-3.5-3.5S8.07 6.5 10 6.5s3.5 1.57 3.5 3.5-1.57 3.5-3.5 3.5z"/></svg>
<svg class="r" style="left:247px;top:794px" width="12" height="14" viewBox="0 0 12 14"><path d="M9.5 1.2L3 7l6.5 5.8" fill="none" stroke="#5f6368" stroke-width="1.8"/></svg>
<div class="r" style="left:0.00px;top:0.00px;width:1600.00px;height:66.00px;background:#ffffff;border-bottom:1px solid #dadce0;box-sizing:content-box;"></div>
<svg class="r" style="left:5px;top:12px" width="32" height="36" viewBox="0 0 32 36"><circle cx="5.2" cy="30.6" r="4.2" fill="#e37400"/><rect x="12" y="14" width="7.6" height="20.8" rx="3.8" fill="#e37400"/><rect x="21.9" y="1" width="8.3" height="33.8" rx="4.15" fill="#f9ab00"/></svg>
<div class="t " style="left:59.00px;top:17.84px;font-size:25px;line-height:25px;color:#5f6368;font-weight:normal;">Analytics</div>
<div class="r" style="left:178.00px;top:12.00px;width:1.00px;height:36.00px;background:#dadce0;"></div>
<div class="t " style="left:197.80px;top:7.75px;font-size:13px;line-height:13px;color:#5f6368;font-weight:normal;letter-spacing:0.74px;">All accounts</div>
<svg class="r" style="left:282px;top:10px" width="8" height="10" viewBox="0 0 8 10"><path d="M1.3 1l4.6 4-4.6 4" fill="none" stroke="#5f6368" stroke-width="1.5"/></svg>
<div class="t " style="left:295.40px;top:7.75px;font-size:13px;line-height:13px;color:#5f6368;font-weight:normal;letter-spacing:0.55px;">LivingCozy</div>
<div class="t " style="left:198.00px;top:26.96px;font-size:24.5px;line-height:24.5px;color:#202124;font-weight:normal;letter-spacing:0.3px;">All Web Site Data</div>
<svg class="r" style="left:403px;top:36px" width="12" height="7" viewBox="0 0 12 7"><path d="M0.5 0.5h10.5L5.75 6z" fill="#5f6368"/></svg>
<div class="r" style="left:437.00px;top:2.20px;width:737.00px;height:55.30px;background:#e8eaed;border-radius:8px;"></div>
<svg class="r" style="left:466px;top:18px" width="22" height="22" viewBox="0 0 22 22"><circle cx="9" cy="9" r="6.6" fill="none" stroke="#3c4043" stroke-width="2.2"/><path d="M13.7 13.7l6 6" stroke="#3c4043" stroke-width="2.4"/></svg>
<div class="t " style="left:515.60px;top:22.26px;font-size:16px;line-height:16px;color:#9aa0a6;font-weight:normal;letter-spacing:0.7px;">Try searching &ldquo;Worst pages by load speed&rdquo;</div>
<svg class="r" style="left:1351px;top:18px" width="22" height="24" viewBox="0 0 22 24"><path d="M10.5 23.2c1.3 0 2.3-1 2.3-2.3H8.2c0 1.3 1 2.3 2.3 2.3zM17.5 16.3V10.5c0-3.6-1.9-6.6-5.3-7.4V2.3C12.2 1.4 11.4.6 10.5.6S8.8 1.4 8.8 2.3v.8C5.4 3.9 3.5 6.9 3.5 10.5v5.8L1.2 18.6v1.2h18.6v-1.2z" fill="#5f6368"/></svg>
<div class="r" style="left:1364px;top:12px;width:21px;height:21px;border-radius:50%;background:#fbbc04;box-shadow:0 1px 2px rgba(0,0,0,.3)"></div>
<svg class="r" style="left:1364px;top:12px" width="21" height="21"><path d="M11.7 5.8v9.1h-1.65V7.7l-2.3.8V7.1l3.7-1.3z" fill="#111"/></svg>
<svg class="r" style="left:1407px;top:21px" width="20" height="20" viewBox="0 0 20 20"><rect x="0.5" y="0.5" width="6.5" height="6.5" fill="#5f6368"/><rect x="12" y="0.5" width="6.5" height="6.5" fill="#5f6368"/><rect x="0.5" y="12" width="6.5" height="6.5" fill="#5f6368"/><rect x="12" y="12" width="6.5" height="6.5" fill="#5f6368"/></svg>
<svg class="r" style="left:1455px;top:18px" width="24" height="24" viewBox="0 0 24 24"><circle cx="12" cy="12" r="11.5" fill="#5f6368"/><path d="M8.3 8.7c0-2.3 1.7-3.9 3.8-3.9s3.8 1.6 3.8 3.6c0 2.6-3.2 2.9-3.2 6" fill="none" stroke="#fff" stroke-width="2.3"/><rect x="10.9" y="17.3" width="2.5" height="2.7" fill="#fff"/></svg>
<div class="r" style="left:1511.2px;top:20.7px;width:4.6px;height:4.6px;border-radius:50%;background:#5f6368"></div>
<div class="r" style="left:1511.2px;top:27.7px;width:4.6px;height:4.6px;border-radius:50%;background:#5f6368"></div>
<div class="r" style="left:1511.2px;top:34.5px;width:4.6px;height:4.6px;border-radius:50%;background:#5f6368"></div>
<svg class="r" style="left:1546px;top:11.5px" width="37" height="37" viewBox="0 0 37 37"><defs><clipPath id="av"><circle cx="18.3" cy="18.3" r="18.1"/></clipPath><filter id="bl"><feGaussianBlur stdDeviation="0.9"/></filter></defs><g clip-path="url(#av)"><rect width="37" height="37" fill="#2f7a33"/><g filter="url(#bl)"><circle cx="6" cy="12" r="6" fill="#6fae55"/><circle cx="10" cy="22" r="4" fill="#9cc77e"/><circle cx="3" cy="24" r="4" fill="#2b8a3a"/><circle cx="27" cy="8" r="4" fill="#a7d08c"/><circle cx="26" cy="18" r="3" fill="#c3dfb0"/><rect x="29" y="6" width="9" height="22" fill="#163f1d"/><circle cx="14" cy="4" r="3" fill="#d8ebcb"/></g><path d="M12.7 11c0-5 2.5-8 6-8s6 3 6 8c0 5-2.6 9.2-6 9.2s-6-4.2-6-9.2z" fill="#dcae95"/><path d="M12.6 9.5c-.3-4.5 2.2-6.9 6.1-6.9s6.4 2.4 6 6.9c-.8-2.4-2-3.6-6-3.6s-5.3 1.2-6.1 3.6z" fill="#4a3326"/><path d="M13.2 13.5c.4 4 2.5 6.8 5.5 6.8s5.1-2.8 5.5-6.8c-.8 2-2.3 3.2-5.5 3.2s-4.7-1.2-5.5-3.2z" fill="#9b6a4c"/><rect x="15.2" y="18" width="7" height="8.5" fill="#d6a589"/><path d="M0 37V29c1.5-3.5 6-5 11-5.6l3.2-.7c1.2 2.2 2.6 3 4.5 3s3.3-.8 4.5-3l3.2.7c5 .6 9.5 2.1 11 5.6V37z" fill="#46545f"/><rect x="13" y="31.8" width="11" height="2.2" fill="#c9d1d6" opacity="0.85"/></g></svg>
<svg class="r" style="left:0;top:0;filter:drop-shadow(0.8px 0.8px 0.7px rgba(90,40,20,.28))" width="320" height="818"><polygon points="133.90,48.10 146.20,76.60 153.84,65.51 187.58,87.11 189.42,84.49 157.56,60.19 165.20,49.10" fill="#3ad6fe" stroke="#3ad6fe" stroke-width="0.6" stroke-linejoin="round"/></svg>
<svg class="r" style="left:0;top:0;filter:drop-shadow(0.8px 0.8px 0.7px rgba(90,40,20,.28))" width="320" height="818"><polygon points="161.60,306.20 192.80,303.10 184.69,292.52 234.08,252.06 232.12,249.54 180.71,287.38 172.60,276.80" fill="#3ad6fe" stroke="#3ad6fe" stroke-width="0.6" stroke-linejoin="round"/></svg>
<svg class="r" style="left:0;top:0;filter:drop-shadow(0.8px 0.8px 0.7px rgba(90,40,20,.28))" width="320" height="818"><polygon points="187.30,369.80 195.70,399.90 204.69,389.98 251.71,431.27 253.89,428.93 209.11,385.22 218.10,375.30" fill="#3ad6fe" stroke="#3ad6fe" stroke-width="0.6" stroke-linejoin="round"/></svg>
<svg class="r" style="left:0;top:0" width="240" height="120"><path d="M211.2,79 L211.2,104.1 L204.9,104.1 L204.9,87.2 L199.3,88.6 L199.3,83.2 L205.6,79 Z" fill="#fff" stroke="#fff" stroke-width="7" stroke-linejoin="round" opacity="0.9"/><path d="M211.2,79 L211.2,104.1 L204.9,104.1 L204.9,87.2 L199.3,88.6 L199.3,83.2 L205.6,79 Z" fill="#000" stroke="#000" stroke-width="4.4" stroke-linejoin="round"/><path d="M211.2,79 L211.2,104.1 L204.9,104.1 L204.9,87.2 L199.3,88.6 L199.3,83.2 L205.6,79 Z" fill="#3ad6fe"/></svg>
<svg class="r" style="left:218.60px;top:210.20px" width="60" height="60"><text x="30" y="45" text-anchor="middle" style="font-family:'Liberation Sans',sans-serif;font-weight:bold" font-size="31" fill="#fff" stroke="#fff" stroke-width="10" stroke-linejoin="round" opacity="0.9">2</text><text x="30" y="45" text-anchor="middle" style="font-family:'Liberation Sans',sans-serif;font-weight:bold" font-size="31" fill="#000" stroke="#000" stroke-width="8.2" stroke-linejoin="round">2</text><text x="30" y="45" text-anchor="middle" style="font-family:'Liberation Sans',sans-serif;font-weight:bold" font-size="31" fill="#3ad6fe" stroke="#3ad6fe" stroke-width="2.6" stroke-linejoin="round">2</text></svg>
<svg class="r" style="left:239.40px;top:402.90px" width="60" height="60"><text x="30" y="45" text-anchor="middle" style="font-family:'Liberation Sans',sans-serif;font-weight:bold" font-size="31" fill="#fff" stroke="#fff" stroke-width="10" stroke-linejoin="round" opacity="0.9">3</text><text x="30" y="45" text-anchor="middle" style="font-family:'Liberation Sans',sans-serif;font-weight:bold" font-size="31" fill="#000" stroke="#000" stroke-width="8.2" stroke-linejoin="round">3</text><text x="30" y="45" text-anchor="middle" style="font-family:'Liberation Sans',sans-serif;font-weight:bold" font-size="31" fill="#3ad6fe" stroke="#3ad6fe" stroke-width="2.6" stroke-linejoin="round">3</text></svg>
<div class="r" style="left:0;top:770px;width:1600px;height:48px;background:linear-gradient(to bottom, rgba(60,64,67,0), rgba(60,64,67,0.045));pointer-events:none"></div>
</body></html>
